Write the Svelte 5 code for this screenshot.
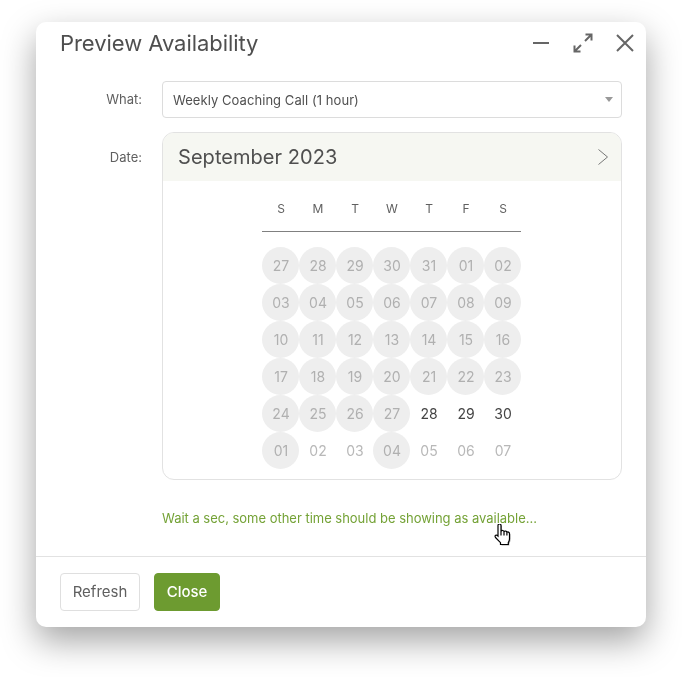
<script>
  const weekdays = ['S', 'M', 'T', 'W', 'T', 'F', 'S'];
  // b = booked (grey circle), a = available (dark), o = other month (light)
  const days = [
    ['27', 'b'], ['28', 'b'], ['29', 'b'], ['30', 'b'], ['31', 'b'], ['01', 'b'], ['02', 'b'],
    ['03', 'b'], ['04', 'b'], ['05', 'b'], ['06', 'b'], ['07', 'b'], ['08', 'b'], ['09', 'b'],
    ['10', 'b'], ['11', 'b'], ['12', 'b'], ['13', 'b'], ['14', 'b'], ['15', 'b'], ['16', 'b'],
    ['17', 'b'], ['18', 'b'], ['19', 'b'], ['20', 'b'], ['21', 'b'], ['22', 'b'], ['23', 'b'],
    ['24', 'b'], ['25', 'b'], ['26', 'b'], ['27', 'b'], ['28', 'a'], ['29', 'a'], ['30', 'a'],
    ['01', 'b'], ['02', 'o'], ['03', 'o'], ['04', 'b'], ['05', 'o'], ['06', 'o'], ['07', 'o']
  ];
</script>

<div class="page">
  <div class="dialog">
    <header class="titlebar">
      <h1>Preview Availability</h1>
      <div class="controls">
        <svg width="18" height="18" viewBox="0 0 18 18"><path d="M1 9h16" /></svg>
        <svg width="20" height="20" viewBox="0 0 20 20"><path d="M1.500 18.500L8 12M1.500 12.500v6h6M18.500 1.500L12 8M12.500 1.500h6v6" /></svg>
        <svg width="18" height="18" viewBox="0 0 18 18"><path d="M1 1l16 16M17 1L1 17" /></svg>
      </div>
    </header>

    <div class="form">
      <div class="label what">What:</div>
      <div class="select">
        <span>Weekly Coaching Call (1 hour)</span>
        <i class="arrow"></i>
      </div>

      <div class="label date">Date:</div>
      <div class="calendar">
        <div class="month">
          <span>September 2023</span>
          <svg width="12" height="18" viewBox="0 0 12 18"><path d="M1.500 1.500L10.500 9l-9 7.500" /></svg>
        </div>
        <div class="grid-wrap">
          <div class="weekdays">
            {#each weekdays as w}
              <div>{w}</div>
            {/each}
          </div>
          <div class="days">
            {#each days as [num, kind]}
              <div class="day {kind}">{num}</div>
            {/each}
          </div>
        </div>
      </div>
    </div>

    <p class="message">Wait a sec, some other time should be showing as available...</p>

    <footer>
      <button class="refresh">Refresh</button>
      <button class="close">Close</button>
    </footer>

    <svg class="cursor" width="18" height="24" viewBox="0 0 18 24">
      <path class="cursor-shadow" d="M5 2.500c0-2 3-2 3 0v6c.5-1.500 3-1.300 3 .3.600-1.200 2.800-1 2.900.6.800-.9 2.600-.4 2.600 1.300v5.300c0 1.600-.7 2.500-1.200 3.500v2H7.500v-1.800L2.500 14.500c-1.400-2 .9-3.300 2.500-1.500z" />
      <path class="cursor-hand" d="M4 1.500c0-2 3-2 3 0v6c.5-1.500 3-1.300 3 .3.600-1.200 2.800-1 2.900.6.800-.9 2.600-.4 2.600 1.300v5.300c0 1.600-.7 2.500-1.200 3.500v2H6.500v-1.800L1.500 13.500c-1.400-2 .9-3.300 2.500-1.500zM7 7.500v4M10 7.800v3.700M12.900 8.400v3.100" />
    </svg>
  </div>
</div>

<style>
  :global(body) {
    background: #fff;
    font-family: Inter, "Liberation Sans", sans-serif;
  }
  .page {
    padding: 22px 36px 50px;
    height: 677px;
    box-sizing: border-box;
    overflow: hidden;
  }
  .dialog {
    position: relative;
    width: 610px;
    height: 605px;
    background: #fff;
    border-radius: 10px;
    box-shadow: 0 14px 34px rgba(0, 0, 0, 0.36);
    display: flex;
    flex-direction: column;
    will-change: transform;
  }
  .titlebar {
    height: 59px;
    padding: 8px 12px 0 24px;
    box-sizing: border-box;
    display: flex;
    justify-content: space-between;
    align-items: flex-start;
  }
  h1 {
    margin: 0;
    font-size: 22px;
    line-height: 26px;
    font-weight: 400;
    letter-spacing: -0.05px;
    color: #4f4f4f;
  }
  .controls {
    display: flex;
    align-items: center;
    gap: 23px;
    padding-top: 3px;
  }
  .controls svg path {
    fill: none;
    stroke: #666;
    stroke-width: 2;
  }
  .form {
    display: grid;
    grid-template-columns: 106px 460px;
    column-gap: 20px;
    row-gap: 14px;
    padding-right: 24px;
  }
  .label {
    font-size: 13px;
    color: #5f5f5f;
    text-align: right;
  }
  .what {
    line-height: 37px;
  }
  .date {
    line-height: 50px;
  }
  .select {
    height: 37px;
    box-sizing: border-box;
    border: 1px solid #dcdcdc;
    border-radius: 4px;
    padding: 0 10px;
    display: flex;
    align-items: center;
    justify-content: space-between;
    font-size: 13px;
    letter-spacing: 0.06px;
    color: #505050;
  }
  .arrow {
    width: 0;
    height: 0;
    margin-right: -2px;
    border-left: 4px solid transparent;
    border-right: 4px solid transparent;
    border-top: 5px solid #999;
  }
  .calendar {
    height: 348px;
    box-sizing: border-box;
    border: 1px solid #e2e2e2;
    border-radius: 12px;
    overflow: hidden;
  }
  .month {
    height: 48px;
    background: #f6f7f2;
    padding: 0 12px 0 15px;
    display: flex;
    align-items: center;
    justify-content: space-between;
    font-size: 20px;
    color: #4f4f4f;
    letter-spacing: 0.05px;
  }
  .month path {
    fill: none;
    stroke: #777;
    stroke-width: 1;
  }
  .grid-wrap {
    width: 259px;
    margin-left: 99px;
  }
  .weekdays {
    display: grid;
    grid-template-columns: repeat(7, 37px);
    height: 50px;
    margin-bottom: 15px;
    border-bottom: 1px solid #808080;
    font-size: 12px;
    line-height: 56px;
    color: #606060;
    text-align: center;
    text-indent: 1px;
  }
  .days {
    display: grid;
    grid-template-columns: repeat(7, 37px);
    grid-auto-rows: 37px;
  }
  .day {
    width: 37px;
    height: 37px;
    line-height: 37px;
    text-align: center;
    text-indent: 1px;
    font-size: 14px;
    position: relative;
    z-index: 0;
  }
  .day.b {
    color: #b0b0b0;
  }
  .day.b::before {
    content: "";
    position: absolute;
    z-index: -1;
    left: 0;
    top: 0;
    width: 37px;
    height: 37px;
    border-radius: 50%;
    background: #eee;
  }
  .day.a {
    color: #444;
  }
  .day.o {
    color: #b8b8b8;
  }
  .message {
    margin: 29px 0 0 126px;
    font-size: 13px;
    line-height: 18px;
    letter-spacing: -0.02px;
    color: #74a236;
  }
  footer {
    margin-top: 29px;
    border-top: 1px solid #e2e2e2;
    padding: 16px 24px;
    display: flex;
    gap: 14px;
  }
  button {
    height: 38px;
    border-radius: 4px;
    font-family: inherit;
    font-size: 15px;
    padding: 0 0 2px;
  }
  .refresh {
    width: 80px;
    background: #fff;
    border: 1px solid #dfdfdf;
    color: #606060;
  }
  .close {
    width: 66px;
    background: #6d9b30;
    border: 1px solid #6d9b30;
    color: #fff;
    font-weight: 500;
  }
  .cursor {
    position: absolute;
    left: 458px;
    top: 502px;
  }
  .cursor-shadow {
    fill: rgba(0, 0, 0, 0.35);
  }
  .cursor-hand {
    fill: #fff;
    stroke: #000;
    stroke-width: 1.2;
  }
</style>
